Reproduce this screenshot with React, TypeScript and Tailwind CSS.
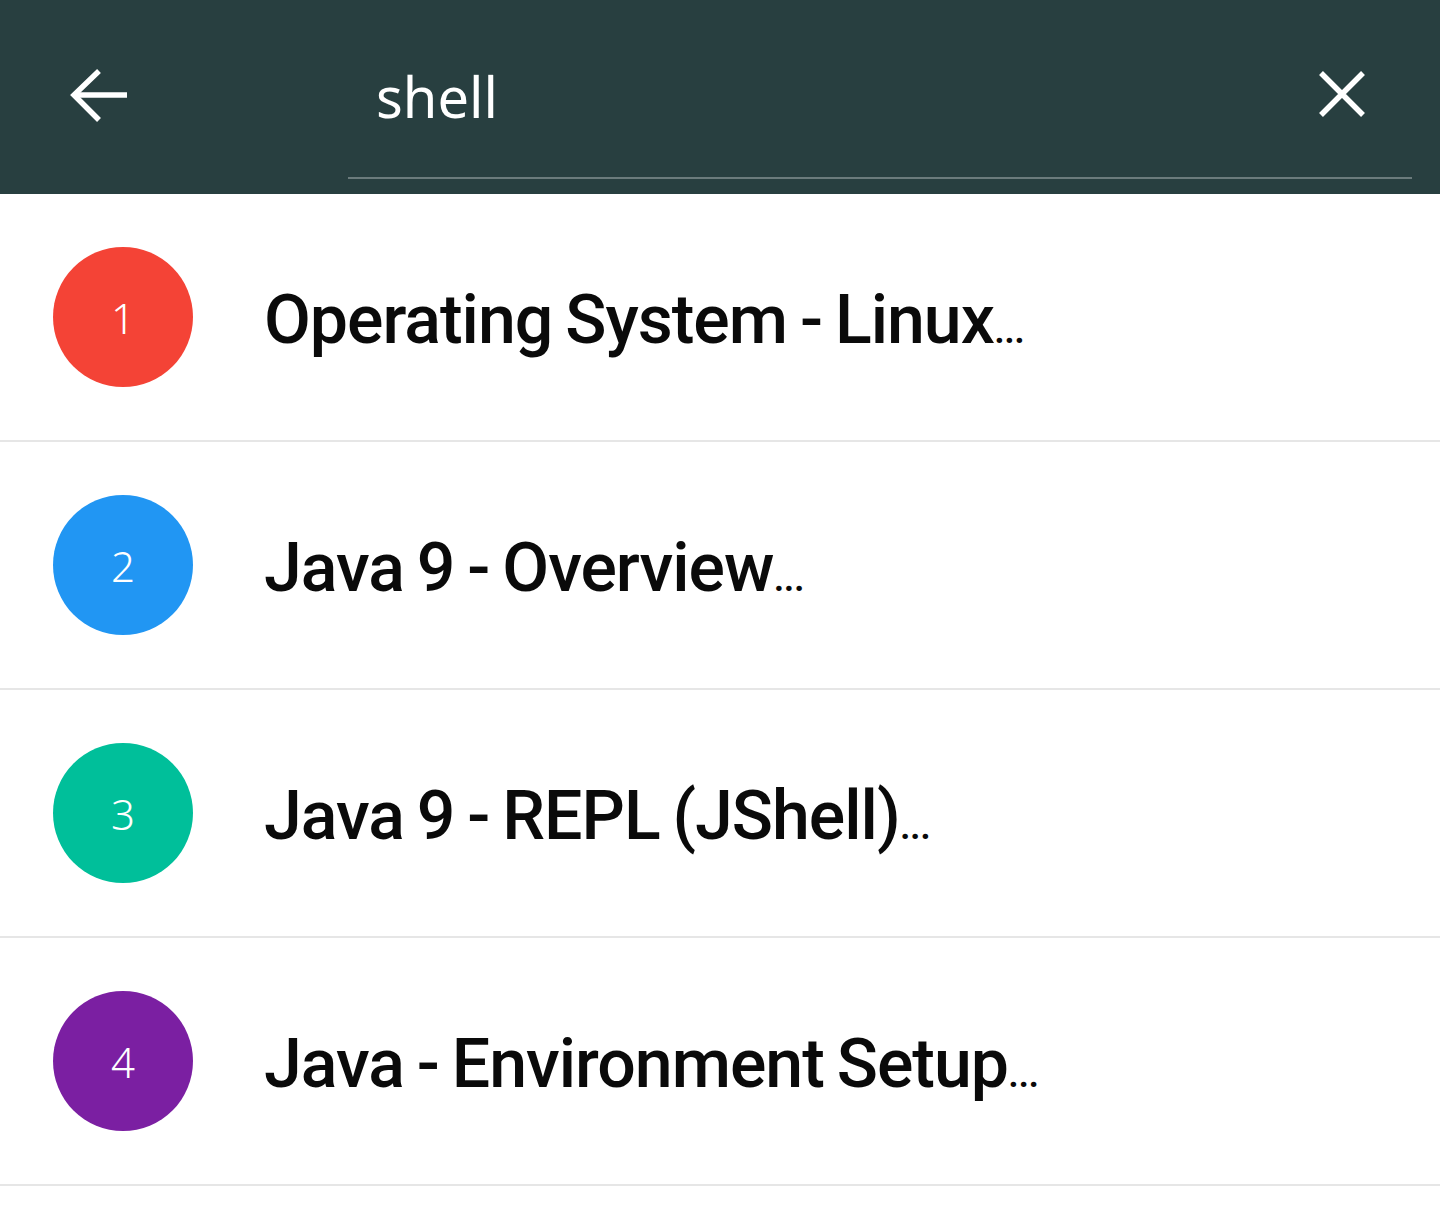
const items = [
  { n: 1, title: "Operating System - Linux", color: "bg-[#f44336]" },
  { n: 2, title: "Java 9 - Overview", color: "bg-[#2196f3]" },
  { n: 3, title: "Java 9 - REPL (JShell)", color: "bg-[#00bf9a]" },
  { n: 4, title: "Java - Environment Setup", color: "bg-[#7b1fa2]" },
];

export default function App() {
  return (
    <div className="w-[1440px] h-[1220px] bg-white font-['Noto_Sans',sans-serif] overflow-hidden">
      <header className="h-[194px] bg-[#283f40] flex items-start">
        <div className="w-[348px] pl-[66px] pt-[66px]">
          <svg width="64" height="60" viewBox="0 0 64 60" fill="none" stroke="white" strokeWidth="5.5">
            <path d="M61 29H8" />
            <path d="M33 5L8 29L33 54" />
          </svg>
        </div>
        <div className="flex-1 mr-[28px] h-[179px] border-b-2 border-[#6b7b7c] flex items-start">
          <div className="pl-[28px] pt-[58px] flex-1 text-white text-[56px] leading-[76px]">shell</div>
          <div className="pt-[70px] pr-[46px]">
            <svg width="48" height="48" viewBox="0 0 48 48" stroke="white" strokeWidth="5.5">
              <path d="M3 3L45 45M45 3L3 45" />
            </svg>
          </div>
        </div>
      </header>
      <ul>
        {items.map((it) => (
          <li key={it.n} className="h-[248px] border-b-2 border-[#e6e6e6] flex items-center">
            <div
              className={`ml-[53px] w-[140px] h-[140px] rounded-full ${it.color} flex items-center justify-center text-white text-[42px] font-light`}
            >
              {it.n}
            </div>
            <div className="ml-[71px] text-[#0a0a0a] font-['Roboto',sans-serif] text-[68px] font-medium tracking-[-1px] [word-spacing:-3px] leading-none pt-[6px]">
              {it.title}
              <span className="text-[40px] tracking-[-1px]">...</span>
            </div>
          </li>
        ))}
      </ul>
    </div>
  );
}
